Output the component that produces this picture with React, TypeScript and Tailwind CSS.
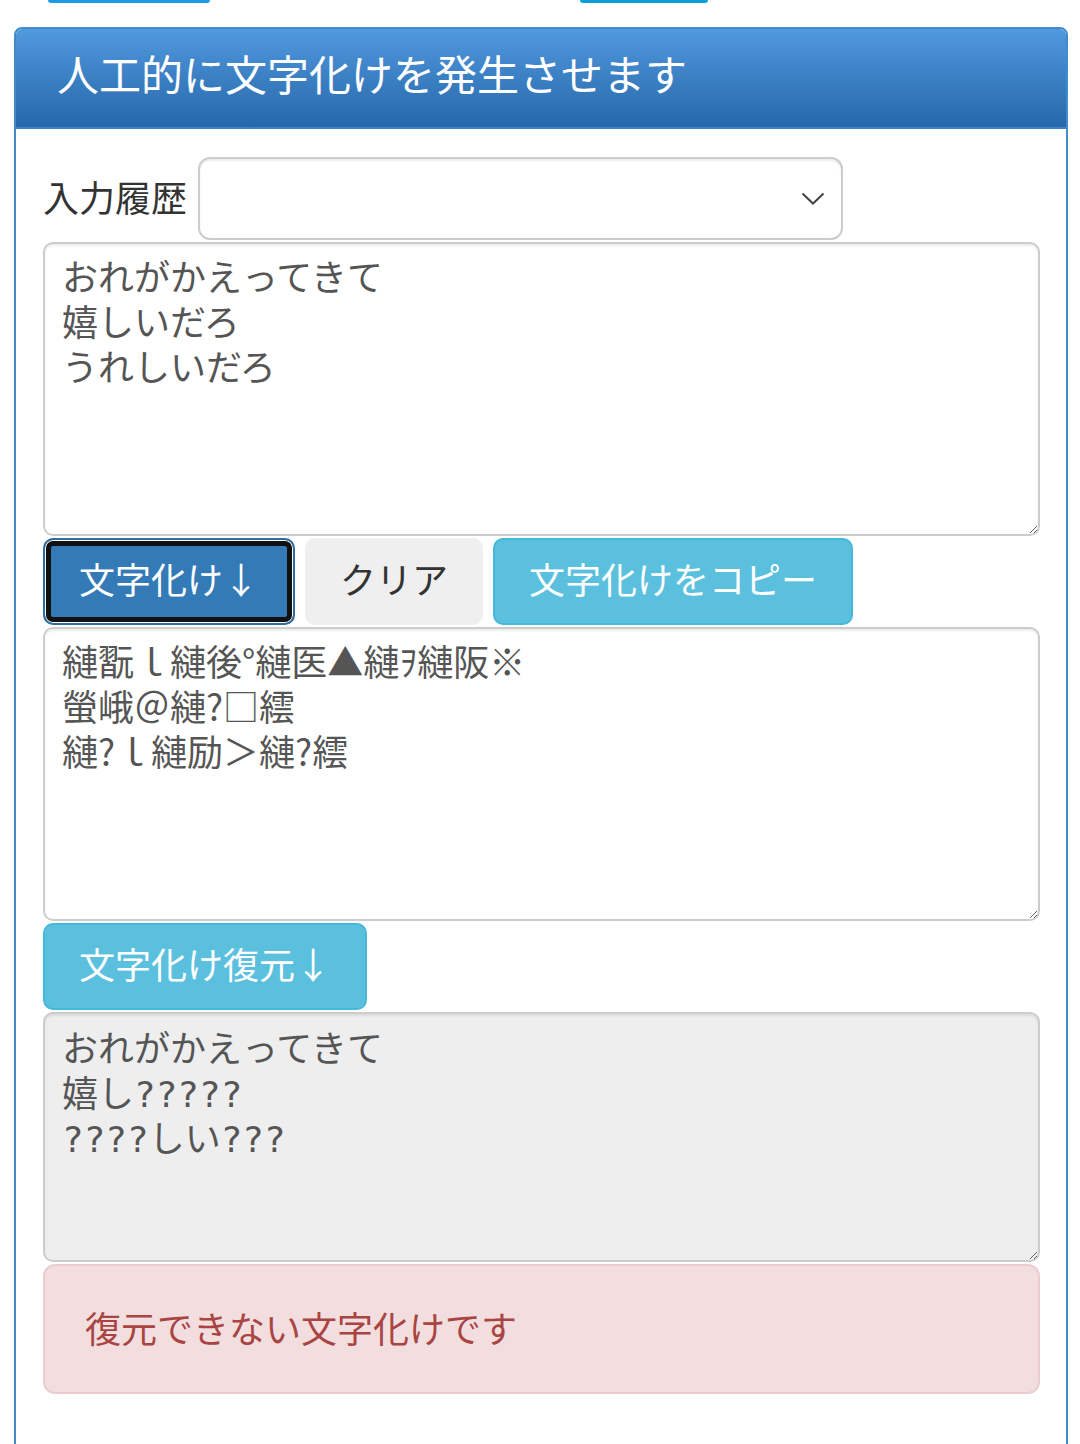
import React from "react";

const font = { fontFamily: '"Noto Sans CJK JP", "Noto Sans", sans-serif' };
const monoQ = { fontFamily: '"DejaVu Sans Mono", "Noto Sans CJK JP", sans-serif' };

const App = () => {
  const input = "おれがかえってきて\n嬉しいだろ\nうれしいだろ";
  const garbled = "縺翫ｌ縺後°縺医▲縺ｦ縺阪※\n螢峨＠縺?□繧\n縺?ｌ縺励＞縺?繧";
  const restored = "おれがかえってきて\n嬉し?????\n????しい???";

  return (
    <div className="w-[1080px] h-[1444px] bg-white overflow-hidden" style={font}>
      {/* cut-off buttons from the section above */}
      <div className="relative h-[27px]">
        <div className="absolute left-[48px] top-0 w-[162px] h-[3px] rounded-b-full bg-[#1d9ae6]" />
        <div className="absolute left-[580px] top-0 w-[128px] h-[3px] rounded-b-full bg-[#08a0d8]" />
      </div>

      <div className="ml-[14px] w-[1054px] h-[1440px] border-2 border-[#428bca] rounded-t-[8px] overflow-hidden">
        {/* heading */}
        <div className="h-[100px] flex items-center pl-[41px] bg-gradient-to-b from-[#5199dd] to-[#2667ab] border-b-2 border-[#3b84cc]">
          <h1 className="text-[42px] text-white leading-none -mt-[10px]">人工的に文字化けを発生させます</h1>
        </div>

        {/* body */}
        <div className="pt-[28px] pl-[27px] pr-[26px] flex flex-col gap-[2px]">
          <div className="flex items-center gap-[11px] h-[83px]">
            <label className="text-[36px] text-[#333] leading-none whitespace-nowrap -mt-[6px]">入力履歴</label>
            <div className="relative w-[645px] h-[83px]">
              <select className="appearance-none w-full h-full border-2 border-[#ccc] rounded-[12px] bg-white shadow-[inset_0_2px_2px_rgba(0,0,0,0.075)] text-[36px] outline-none" style={font}>
                <option value=""></option>
              </select>
              <svg className="absolute right-[18px] top-[35px] pointer-events-none" width="24" height="14" viewBox="0 0 24 14">
                <path d="M1.5 1.5 L12 11.5 L22.5 1.5" fill="none" stroke="#444" strokeWidth="2" />
              </svg>
            </div>
          </div>

          <textarea
            className="w-full h-[294px] border-2 border-[#ccc] rounded-[10px] bg-white shadow-[inset_0_2px_2px_rgba(0,0,0,0.075)] px-[17px] pt-[9px] text-[36px] leading-[45px] text-[#555] outline-none"
            style={font}
            defaultValue={input}
          />

          <div className="flex gap-[10px]">
            <button className="h-[87px] px-[34px] pb-[8px] rounded-[10px] border-2 border-[#2e6da4] bg-[#337ab7] text-white text-[36px] leading-none shadow-[inset_0_0_0_1px_#fff,inset_0_0_0_6px_#111]">
              文字化け↓
            </button>
            <button className="h-[87px] px-[35px] pb-[8px] rounded-[10px] bg-[#efefef] text-[#333] text-[36px] leading-none">
              クリア
            </button>
            <button className="h-[87px] px-[34px] pb-[8px] rounded-[10px] border-2 border-[#46b8da] bg-[#5bc0de] text-white text-[36px] leading-none">
              文字化けをコピー
            </button>
          </div>

          <textarea
            className="w-full h-[294px] border-2 border-[#ccc] rounded-[10px] bg-white shadow-[inset_0_2px_2px_rgba(0,0,0,0.075)] px-[17px] pt-[9px] text-[36px] leading-[45px] text-[#555] outline-none"
            style={font}
            defaultValue={garbled}
          />

          <div className="flex">
            <button className="h-[87px] px-[34px] pb-[8px] rounded-[10px] border-2 border-[#46b8da] bg-[#5bc0de] text-white text-[36px] leading-none">
              文字化け復元↓
            </button>
          </div>

          <textarea
            readOnly
            className="w-full h-[250px] border-2 border-[#ccc] rounded-[10px] bg-[#eee] shadow-[inset_0_2px_2px_rgba(0,0,0,0.075)] px-[17px] pt-[13px] text-[36px] leading-[45px] text-[#555] outline-none"
            style={monoQ}
            defaultValue={restored}
          />

          <div className="h-[130px] flex items-center px-[40px] pb-[4px] border-2 border-[#ebccd1] rounded-[12px] bg-[#f2dede] text-[#a94442] text-[36px] leading-none">
            復元できない文字化けです
          </div>
        </div>
      </div>
    </div>
  );
};

export default App;
